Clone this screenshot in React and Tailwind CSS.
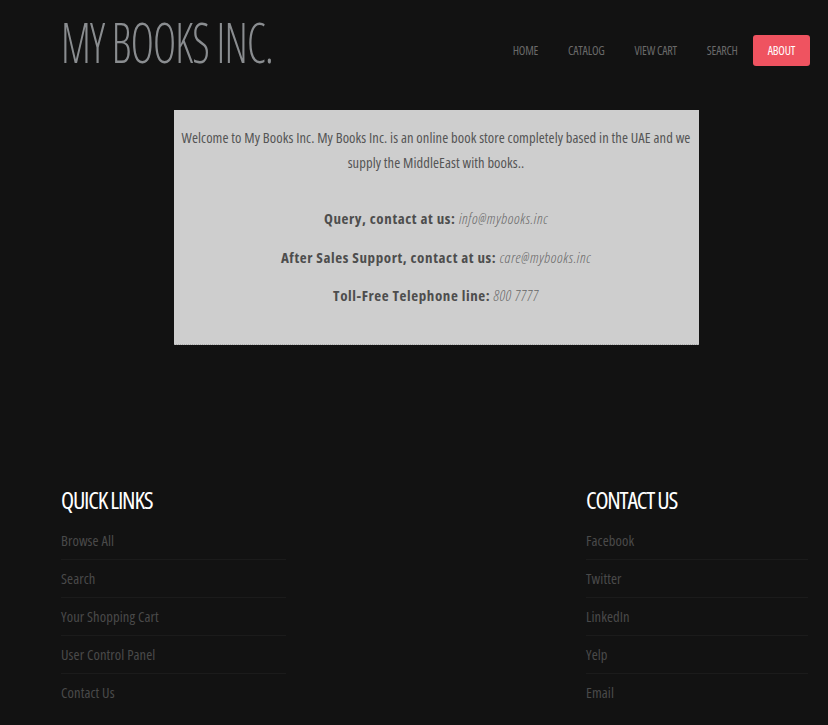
const quickLinks = ['Browse All', 'Search', 'Your Shopping Cart', 'User Control Panel', 'Contact Us'];
const contactLinks = ['Facebook', 'Twitter', 'LinkedIn', 'Yelp', 'Email'];
const nav = ['HOME', 'CATALOG', 'VIEW CART', 'SEARCH'];

function FooterColumn({ title, links, className }) {
  return (
    <div className={className}>
      <h3 className="text-[24px] leading-[32px] font-normal text-white tracking-[-1.2px]">
        {title}
      </h3>
      <ul className="mt-[6px]">
        {links.map((l, i) => (
          <li
            key={l}
            className={`h-[38px] flex items-center text-[14.5px] text-[#4a4a4a] tracking-[0.1px] ${i < links.length - 1 ? 'border-b border-[#1b1b1b]' : ''}`}
          >
            {l}
          </li>
        ))}
      </ul>
    </div>
  );
}

export default function App() {
  return (
    <div className="bg-[#121212] min-h-[725px] w-full font-['Open_Sans',sans-serif] [font-stretch:75%] overflow-hidden">
      <div className="pl-[61px] pr-[18px]">
        <header className="flex items-start justify-between pt-[13px]">
          <div className="text-[55px] leading-[58px] font-light text-[#8a8d90] tracking-[-1px] origin-left scale-x-[0.8]">
            MY BOOKS INC.
          </div>
          <nav className="flex items-center mt-[22px]">
            {nav.map((n) => (
              <a key={n} className="px-[15px] text-[12px] leading-[31px] text-[#6a6a6a] tracking-[-0.2px]">
                {n}
              </a>
            ))}
            <a className="px-[15px] h-[31px] flex items-center rounded-[3px] bg-[#ef5360] text-white text-[12px] tracking-[-0.2px]">
              ABOUT
            </a>
          </nav>
        </header>

        <main className="flex justify-center mt-[39px] pl-[1px]">
          <div className="w-[525px] bg-[#cecece] border-b border-dotted border-[#aaa] text-center pt-[15px] pb-[36px] px-[5px]">
            <p className="text-[14.5px] leading-[25px] text-[#555] tracking-[0.08px]">
              Welcome to My Books Inc. My Books Inc. is an online book store completely based in the UAE and we supply the MiddleEast with books..
            </p>
            <p className="mt-[31px] text-[15px] leading-[25px] text-[#555] tracking-[0.6px]">
              <strong className="font-bold text-[#4d4d4d]">Query, contact at us:</strong>{' '}
              <em className="italic font-light text-[#666]">info@mybooks.inc</em>
            </p>
            <p className="mt-[14px] text-[15px] leading-[25px] text-[#555] tracking-[0.6px]">
              <strong className="font-bold text-[#4d4d4d]">After Sales Support, contact at us:</strong>{' '}
              <em className="italic font-light text-[#666]">care@mybooks.inc</em>
            </p>
            <p className="mt-[13px] text-[15px] leading-[25px] text-[#555] tracking-[0.6px]">
              <strong className="font-bold text-[#4d4d4d]">Toll-Free Telephone line:</strong>{' '}
              <em className="italic font-light text-[#666]">800 7777</em>
            </p>
          </div>
        </main>

        <footer className="flex justify-between mt-[139px]">
          <FooterColumn title="QUICK LINKS" links={quickLinks} className="w-[225px]" />
          <FooterColumn title="CONTACT US" links={contactLinks} className="w-[222px] mr-[2px]" />
        </footer>
      </div>
    </div>
  );
}
